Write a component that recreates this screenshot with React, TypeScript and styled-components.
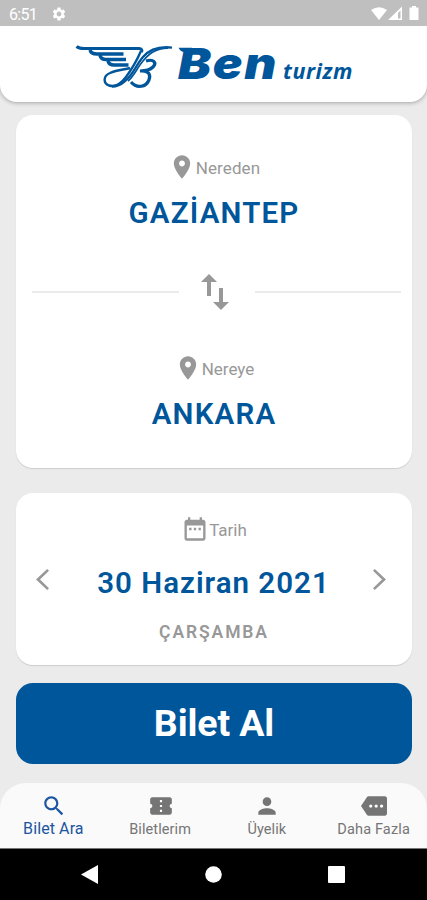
import React from "react";
import styled, { createGlobalStyle } from "styled-components";

const BLUE = "#00569b";
const GREY = "#989898";

const GlobalStyle = createGlobalStyle`
  * { box-sizing: border-box; }
  body { margin: 0; background: #ebebeb; }
  button { border: 0; padding: 0; background: none; font: inherit; color: inherit; }
`;

const Screen = styled.div`
  width: 427px;
  height: 900px;
  display: flex;
  flex-direction: column;
  overflow: hidden;
  background: #ebebeb;
  font-family: Roboto, "Liberation Sans", sans-serif;
`;

const StatusBar = styled.div`
  flex: none;
  height: 26px;
  padding: 2px 7px 0 9px;
  display: flex;
  align-items: center;
  background: #bfbfbf;
  color: #fff;
  font-size: 16px;
`;

const Clock = styled.span`
  width: 42px;
  letter-spacing: -0.7px;
`;

const StatusIcons = styled.div`
  margin-left: auto;
  display: flex;
  align-items: center;
`;

const Header = styled.header`
  flex: none;
  height: 76px;
  background: #fff;
  border-radius: 0 0 17px 17px;
  box-shadow: 0 1px 4px rgba(0, 0, 0, 0.3);
  clip-path: inset(0 0 -10px 0);
`;

const Content = styled.main`
  flex: 1;
  padding: 13px 15px 0 16px;
  display: flex;
  flex-direction: column;
`;

const Card = styled.section<{ $height: number; $gap: number }>`
  flex: none;
  height: ${(p) => p.$height}px;
  margin-bottom: ${(p) => p.$gap}px;
  display: flex;
  flex-direction: column;
  background: #fff;
  border-radius: 17px;
  box-shadow: 0 1px 1px rgba(0, 0, 0, 0.13);
`;

const Stop = styled.div<{ $top: number; $gap?: number }>`
  padding-top: ${(p) => p.$top}px;
  display: flex;
  flex-direction: column;
  align-items: center;
  gap: ${(p) => p.$gap ?? 0}px;
`;

const Label = styled.div`
  height: 28px;
  display: flex;
  align-items: center;
  color: ${GREY};
  font-size: 17px;
  line-height: 28px;
`;

const LabelText = styled.span<{ $spacing: number }>`
  padding-top: 2px;
  letter-spacing: ${(p) => p.$spacing}px;
`;

const Value = styled.div<{ $spacing: number }>`
  height: 36px;
  line-height: 36px;
  color: ${BLUE};
  font-size: 29.5px;
  font-weight: 600;
  letter-spacing: ${(p) => p.$spacing}px;
  white-space: nowrap;
`;

const Divider = styled.div`
  height: 40px;
  margin-top: 41px;
  padding: 0 11px 0 16px;
  display: flex;
  align-items: center;
`;

const Rule = styled.div`
  flex: 1;
  height: 2px;
  background: #ebebeb;
`;

const SwapButton = styled.button`
  width: 76px;
  height: 40px;
  padding-right: 4px;
  display: flex;
  align-items: center;
  justify-content: center;
  color: ${GREY};
`;

const DateRow = styled.div`
  height: 36px;
  margin-top: 22px;
  padding: 0 19px 0 13px;
  display: flex;
  align-items: center;
  justify-content: space-between;
`;

const SelectedDate = styled(Value)`
  padding-left: 5px;
`;

const Arrow = styled.button`
  width: 26px;
  height: 36px;
  padding-bottom: 7px;
  display: flex;
  align-items: center;
  justify-content: center;
  color: ${GREY};
`;

const Weekday = styled.div`
  margin-top: 19px;
  height: 24px;
  line-height: 24px;
  text-align: center;
  color: ${GREY};
  font-size: 17.5px;
  font-weight: 600;
  letter-spacing: 1.9px;
`;

const BuyButton = styled.button`
  flex: none;
  height: 81px;
  border-radius: 17px;
  background: ${BLUE};
  color: #fff;
  font-size: 37.5px;
  font-weight: 700;
  line-height: 81px;
  letter-spacing: -0.1px;
`;

const TabBar = styled.nav`
  flex: none;
  height: 66px;
  padding-top: 10px;
  display: grid;
  grid-template-columns: repeat(4, 1fr);
  background: #fafafa;
  border-bottom: 1px solid #777;
  border-radius: 26px 26px 0 0;
`;

const Tab = styled.button<{ $active?: boolean }>`
  display: flex;
  flex-direction: column;
  align-items: center;
  color: ${(p) => (p.$active ? "#1c56a0" : "#757575")};
  font-size: ${(p) => (p.$active ? 16 : 14.5)}px;

  svg {
    margin-left: 1px;
  }
`;

const TabLabel = styled.span<{ $spacing: number; $top: number }>`
  margin-top: ${(p) => p.$top}px;
  height: 20px;
  line-height: 20px;
  letter-spacing: ${(p) => p.$spacing}px;
  white-space: nowrap;
`;

const SystemBar = styled.div`
  flex: none;
  height: 51px;
  padding: 0 29px 0 30px;
  display: grid;
  grid-template-columns: repeat(3, 1fr);
  align-items: center;
  justify-items: center;
  background: #000;
  color: #fff;
`;

const BackButton = styled.button`
  padding-right: 3px;
`;

const Glyph = styled.svg`
  display: block;
  flex: none;
  fill: currentColor;
`;

type IconProps = { d: string; width: number; height?: number; box?: string };

const Icon = ({ d, width, height = width, box = "0 0 24 24" }: IconProps) => (
  <Glyph width={width} height={height} viewBox={box} preserveAspectRatio="none">
    <path d={d} />
  </Glyph>
);

const paths = {
  gear: "M19.14 12.94c.04-.3.06-.61.06-.94 0-.32-.02-.64-.07-.94l2.03-1.58c.18-.14.23-.41.12-.61l-1.92-3.32c-.12-.22-.37-.29-.59-.22l-2.39.96c-.5-.38-1.03-.7-1.62-.94l-.36-2.54c-.04-.24-.24-.41-.48-.41h-3.84c-.24 0-.43.17-.47.41l-.36 2.54c-.59.24-1.13.57-1.62.94l-2.39-.96c-.22-.08-.47 0-.59.22L2.74 8.87c-.12.21-.08.47.12.61l2.03 1.58c-.05.3-.09.63-.09.94s.02.64.07.94l-2.03 1.58c-.18.14-.23.41-.12.61l1.92 3.32c.12.22.37.29.59.22l2.39-.96c.5.38 1.03.7 1.62.94l.36 2.54c.05.24.24.41.48.41h3.84c.24 0 .44-.17.47-.41l.36-2.54c.59-.24 1.13-.56 1.62-.94l2.39.96c.22.08.47 0 .59-.22l1.92-3.32c.12-.22.07-.47-.12-.61l-2.01-1.58zM12 15.6c-1.98 0-3.6-1.62-3.6-3.6s1.62-3.6 3.6-3.6 3.6 1.62 3.6 3.6-1.62 3.6-3.6 3.6z",
  pin: "M12 2C8.13 2 5 5.13 5 9c0 5.25 7 13 7 13s7-7.75 7-13c0-3.87-3.13-7-7-7zm0 9.5c-1.38 0-2.5-1.12-2.5-2.5s1.12-2.5 2.5-2.5 2.5 1.12 2.5 2.5-1.12 2.5-2.5 2.5z",
  calendar: "M9 11H7v2h2v-2zm4 0h-2v2h2v-2zm4 0h-2v2h2v-2zm2-7h-1V2h-2v2H8V2H6v2H5c-1.11 0-1.99.9-1.99 2L3 20c0 1.1.89 2 2 2h14c1.1 0 2-.9 2-2V6c0-1.1-.9-2-2-2zm0 16H5V9h14v11z",
  swap: "M8 0L16 8H10V22H6V8H0ZM18 14H22V28H28L20 36L12 28H18Z",
  previous: "M11.2 0L13 1.8L4 10.5L13 19.2L11.2 21L0 10.5Z",
  next: "M1.8 0L0 1.8L9 10.5L0 19.2L1.8 21L13 10.5Z",
  search: "M15.5 14h-.79l-.28-.27C15.41 12.59 16 11.11 16 9.5 16 5.91 13.09 3 9.5 3S3 5.91 3 9.5 5.91 16 9.5 16c1.61 0 3.09-.59 4.23-1.57l.27.28v.79l5 4.99L20.49 19l-4.99-5zm-6 0C7.01 14 5 11.99 5 9.5S7.01 5 9.5 5 14 7.01 14 9.5 11.99 14 9.5 14z",
  ticket: "M22 10V6c0-1.11-.9-2-2-2H4c-1.1 0-1.99.89-1.99 2v4c1.1 0 1.99.9 1.99 2s-.89 2-2 2v4c0 1.1.9 2 2 2h16c1.1 0 2-.9 2-2v-4c-1.1 0-2-.9-2-2s.9-2 2-2zm-9 7.5h-2v-2h2v2zm0-4.5h-2v-2h2v2zm0-4.5h-2v-2h2v2z",
  person: "M12 12c2.21 0 4-1.79 4-4s-1.79-4-4-4-4 1.79-4 4 1.79 4 4 4zm0 2c-2.67 0-8 1.34-8 4v2h16v-2c0-2.66-5.33-4-8-4z",
  more: "M22 3H7c-.69 0-1.23.35-1.59.88L0 12l5.41 8.11c.36.53.97.89 1.66.89H22c1.1 0 2-.9 2-2V5c0-1.1-.9-2-2-2zM9 13.5c-.83 0-1.5-.67-1.5-1.5s.67-1.5 1.5-1.5 1.5.67 1.5 1.5-.67 1.5-1.5 1.5zm5 0c-.83 0-1.5-.67-1.5-1.5s.67-1.5 1.5-1.5 1.5.67 1.5 1.5-.67 1.5-1.5 1.5zm5 0c-.83 0-1.5-.67-1.5-1.5s.67-1.5 1.5-1.5 1.5.67 1.5 1.5-.67 1.5-1.5 1.5z",
};

const Logo = () => (
  <svg width="427" height="76" viewBox="0 26 427 76" fill="none" stroke={BLUE}>
    {/* winged monogram */}
    <path d="M76.5 46.5Q79 48.6 84 48.6H139Q143 48.8 141.5 52" strokeWidth="3" />
    <path d="M90 50Q91 54 97 54H123.5M100 55.5Q101 59.5 106 59.5H126M108 61Q109 65 114 65H128.5" strokeWidth="3.4" />
    <path d="M141 51C137 60 132 69 126 77C120 85 114 87 109 85.5C103 83 103 76 110 73C118 69 124 70 130 68" strokeWidth="2.4" />
    <path d="M172 47.6C158 46 149 50 143 57C136 65 133 75 125 81C120 85.5 116 86.5 112 86.5" strokeWidth="2.4" />
    <path d="M168 48.2C155 48.5 149 54 143 61C137 68 134 76 128 81" strokeWidth="1.7" />
    <path d="M146 61C154 58.5 157 63 153 67C150 70 145 71 140 71C149 70 151 75 149 80C146 87 137 89 131 82" strokeWidth="3.2" />
    <g fill={BLUE} stroke="none" fontStyle="italic">
      <text x="178" y="79" fontFamily="Inter, sans-serif" fontSize="43" fontWeight="900" letterSpacing="1.5" textLength="100" lengthAdjust="spacingAndGlyphs">Ben</text>
      <text x="283" y="79" fontFamily='"Open Sans", sans-serif' fontSize="21.5" fontWeight="700" letterSpacing="0.6" textLength="70" lengthAdjust="spacingAndGlyphs">turizm</text>
      {/* slab on the initial's upper left corner */}
      <path d="M178.5 47.7H192V52H184Q181 52 178.5 47.7Z" />
    </g>
  </svg>
);

const tabs = [
  { label: "Bilet Ara", d: paths.search, spacing: 0.1, top: 0, active: true },
  { label: "Biletlerim", d: paths.ticket, spacing: 0.1, top: 1 },
  { label: "Üyelik", d: paths.person, spacing: 0.1, top: 1 },
  { label: "Daha Fazla", d: paths.more, spacing: 0.15, top: 1 },
];

export default function App() {
  return (
    <>
      <GlobalStyle />
      <Screen>
        <StatusBar>
          <Clock>6:51</Clock>
          <Icon d={paths.gear} width={16} />
          <StatusIcons>
            <Glyph width="49" height="16" viewBox="0 0 49 16">
              <path d="M0 4Q8-1.5 16 4L8 14Z" />
              <path fillRule="evenodd" d="M17 14L31 .5V14ZM27 7V12.5H29.5V4.5Z" />
              <path d="M41 1.5V0h4v1.5h2.5V14h-9V1.5Z" />
            </Glyph>
          </StatusIcons>
        </StatusBar>
        <Header>
          <Logo />
        </Header>
        <Content>
          <Card $height={353} $gap={25}>
            <Stop $top={38} $gap={14}>
              <Label>
                <Icon d={paths.pin} width={28} />
                <LabelText $spacing={0.1}>Nereden</LabelText>
              </Label>
              <Value $spacing={1.2}>GAZİANTEP</Value>
            </Stop>
            <Divider>
              <Rule />
              <SwapButton aria-label="Değiştir">
                <Icon d={paths.swap} width={28} height={36} box="0 0 28 36" />
              </SwapButton>
              <Rule />
            </Divider>
            <Stop $top={42} $gap={14}>
              <Label>
                <Icon d={paths.pin} width={28} />
                <LabelText $spacing={0}>Nereye</LabelText>
              </Label>
              <Value $spacing={1.2}>ANKARA</Value>
            </Stop>
          </Card>
          <Card $height={172} $gap={18}>
            <Stop $top={22}>
              <Label>
                <Icon d={paths.calendar} width={28} />
                <LabelText $spacing={0}>Tarih</LabelText>
              </Label>
            </Stop>
            <DateRow>
              <Arrow aria-label="Önceki gün">
                <Icon d={paths.previous} width={13} height={21} box="0 0 13 21" />
              </Arrow>
              <SelectedDate $spacing={1}>30 Haziran 2021</SelectedDate>
              <Arrow aria-label="Sonraki gün">
                <Icon d={paths.next} width={13} height={21} box="0 0 13 21" />
              </Arrow>
            </DateRow>
            <Weekday>ÇARŞAMBA</Weekday>
          </Card>
          <BuyButton>Bilet Al</BuyButton>
        </Content>
        <TabBar>
          {tabs.map((t) => (
            <Tab key={t.label} $active={t.active}>
              <Icon d={t.d} width={26} />
              <TabLabel $spacing={t.spacing} $top={t.top}>{t.label}</TabLabel>
            </Tab>
          ))}
        </TabBar>
        <SystemBar>
          <BackButton aria-label="Geri">
            <Icon d="M0 9.5L17 0V19Z" width={17} height={19} box="0 0 17 19" />
          </BackButton>
          <Glyph width="17" height="17" viewBox="0 0 17 17"><circle cx="8.5" cy="8.5" r="8.3" /></Glyph>
          <Glyph width="17" height="17" viewBox="0 0 17 17"><rect width="17" height="17" rx="1" /></Glyph>
        </SystemBar>
      </Screen>
    </>
  );
}
